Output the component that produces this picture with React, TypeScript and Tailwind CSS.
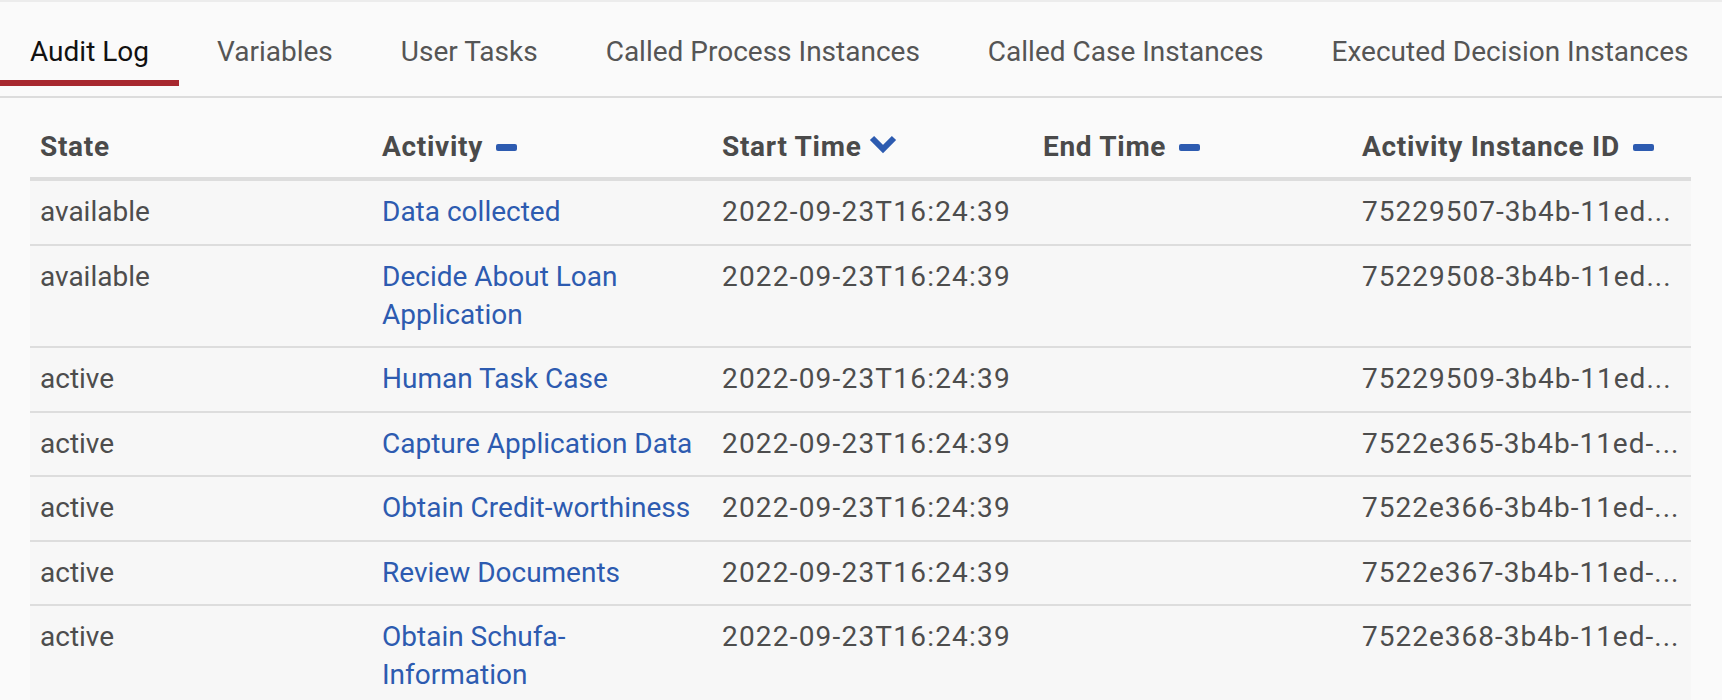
import React from 'react';

// Audit log tab of a process-instance view: tab strip + activity table.

const FONT: React.CSSProperties = { fontFamily: "Roboto, 'Noto Sans', sans-serif" };

type Row = { state: string; activity: string[]; start: string; end: string; id: string };

const TABS = [
  'Audit Log',
  'Variables',
  'User Tasks',
  'Called Process Instances',
  'Called Case Instances',
  'Executed Decision Instances',
];

const ROWS: Row[] = [
  { state: 'available', activity: ['Data collected'], start: '2022-09-23T16:24:39', end: '', id: '75229507-3b4b-11ed...' },
  { state: 'available', activity: ['Decide About Loan', 'Application'], start: '2022-09-23T16:24:39', end: '', id: '75229508-3b4b-11ed...' },
  { state: 'active', activity: ['Human Task Case'], start: '2022-09-23T16:24:39', end: '', id: '75229509-3b4b-11ed...' },
  { state: 'active', activity: ['Capture Application Data'], start: '2022-09-23T16:24:39', end: '', id: '7522e365-3b4b-11ed-...' },
  { state: 'active', activity: ['Obtain Credit-worthiness'], start: '2022-09-23T16:24:39', end: '', id: '7522e366-3b4b-11ed-...' },
  { state: 'active', activity: ['Review Documents'], start: '2022-09-23T16:24:39', end: '', id: '7522e367-3b4b-11ed-...' },
  { state: 'active', activity: ['Obtain Schufa-', 'Information'], start: '2022-09-23T16:24:39', end: '', id: '7522e368-3b4b-11ed-...' },
];

const SortNone = () => (
  <span className="inline-block w-[21px] h-[7px] rounded-[2px] bg-[#2d5bb0] ml-[13px] align-middle relative -top-[1px]" />
);

const SortDesc = () => (
  <svg width="28" height="20" viewBox="0 0 28 20" className="inline-block ml-[8px] align-top mt-[6px]">
    <polyline points="3,4 14,15 25,4" fill="none" stroke="#2d5bb0" strokeWidth="6" strokeLinejoin="miter" />
  </svg>
);

const App: React.FC = () => {
  return (
    <div style={FONT} className="w-full h-[700px] overflow-hidden bg-[#fafafa] border-t-2 border-[#ececec]">
      {/* Tabs */}
      <ul className="flex gap-[8px] pb-[10px] border-b-2 border-[#dcdcdc]">
        {TABS.map((t, i) => (
          <li
            key={t}
            className={`px-[30px] pt-[31px] pb-[9px] text-[28px] leading-[38px] whitespace-nowrap border-b-[6px] ${
              i === 0 ? 'border-[#a7282f] text-[#111]' : 'border-transparent text-[#555]'
            }`}
          >
            {t}
          </li>
        ))}
      </ul>

      {/* Activity table */}
      <table className="mx-[30px] mt-[20px] w-[1661px] table-fixed border-collapse text-[28px] leading-[38px] text-[#4d4d4d]">
        <colgroup>
          <col className="w-[342px]" />
          <col className="w-[340px]" />
          <col className="w-[321px]" />
          <col className="w-[319px]" />
          <col className="w-[339px]" />
        </colgroup>
        <thead>
          <tr className="border-b-4 border-[#dddddd] text-left text-[#4a4a4a] tracking-[0.7px]">
            <th className="pl-[10px] pt-[10px] pb-[11px] font-bold">State</th>
            <th className="pl-[10px] pt-[10px] pb-[11px] font-bold whitespace-nowrap">Activity<SortNone /></th>
            <th className="pl-[10px] pt-[10px] pb-[11px] font-bold whitespace-nowrap">Start Time<SortDesc /></th>
            <th className="pl-[10px] pt-[10px] pb-[11px] font-bold whitespace-nowrap">End Time<SortNone /></th>
            <th className="pl-[10px] pt-[10px] pb-[11px] font-bold whitespace-nowrap">Activity Instance ID<SortNone /></th>
          </tr>
        </thead>
        <tbody className="bg-[#f7f7f7]">
          {ROWS.map(r => (
            <tr key={r.id} className="border-b-2 border-[#dddddd] align-top">
              <td className="pl-[10px] pt-[12px] pb-[12.5px]">{r.state}</td>
              <td className="pl-[10px] pt-[12px] pb-[12.5px] whitespace-nowrap text-[#2d5bb0]">
                {r.activity.map((line, i) => (
                  <div key={i}>{line}</div>
                ))}
              </td>
              <td className="pl-[10px] pt-[12px] pb-[12.5px] whitespace-nowrap tracking-[1.2px]">{r.start}</td>
              <td className="pl-[10px] pt-[12px] pb-[12.5px]">{r.end}</td>
              <td className="pl-[10px] pt-[12px] pb-[12.5px] whitespace-nowrap tracking-[1px]">{r.id}</td>
            </tr>
          ))}
        </tbody>
      </table>
    </div>
  );
};

export default App;
